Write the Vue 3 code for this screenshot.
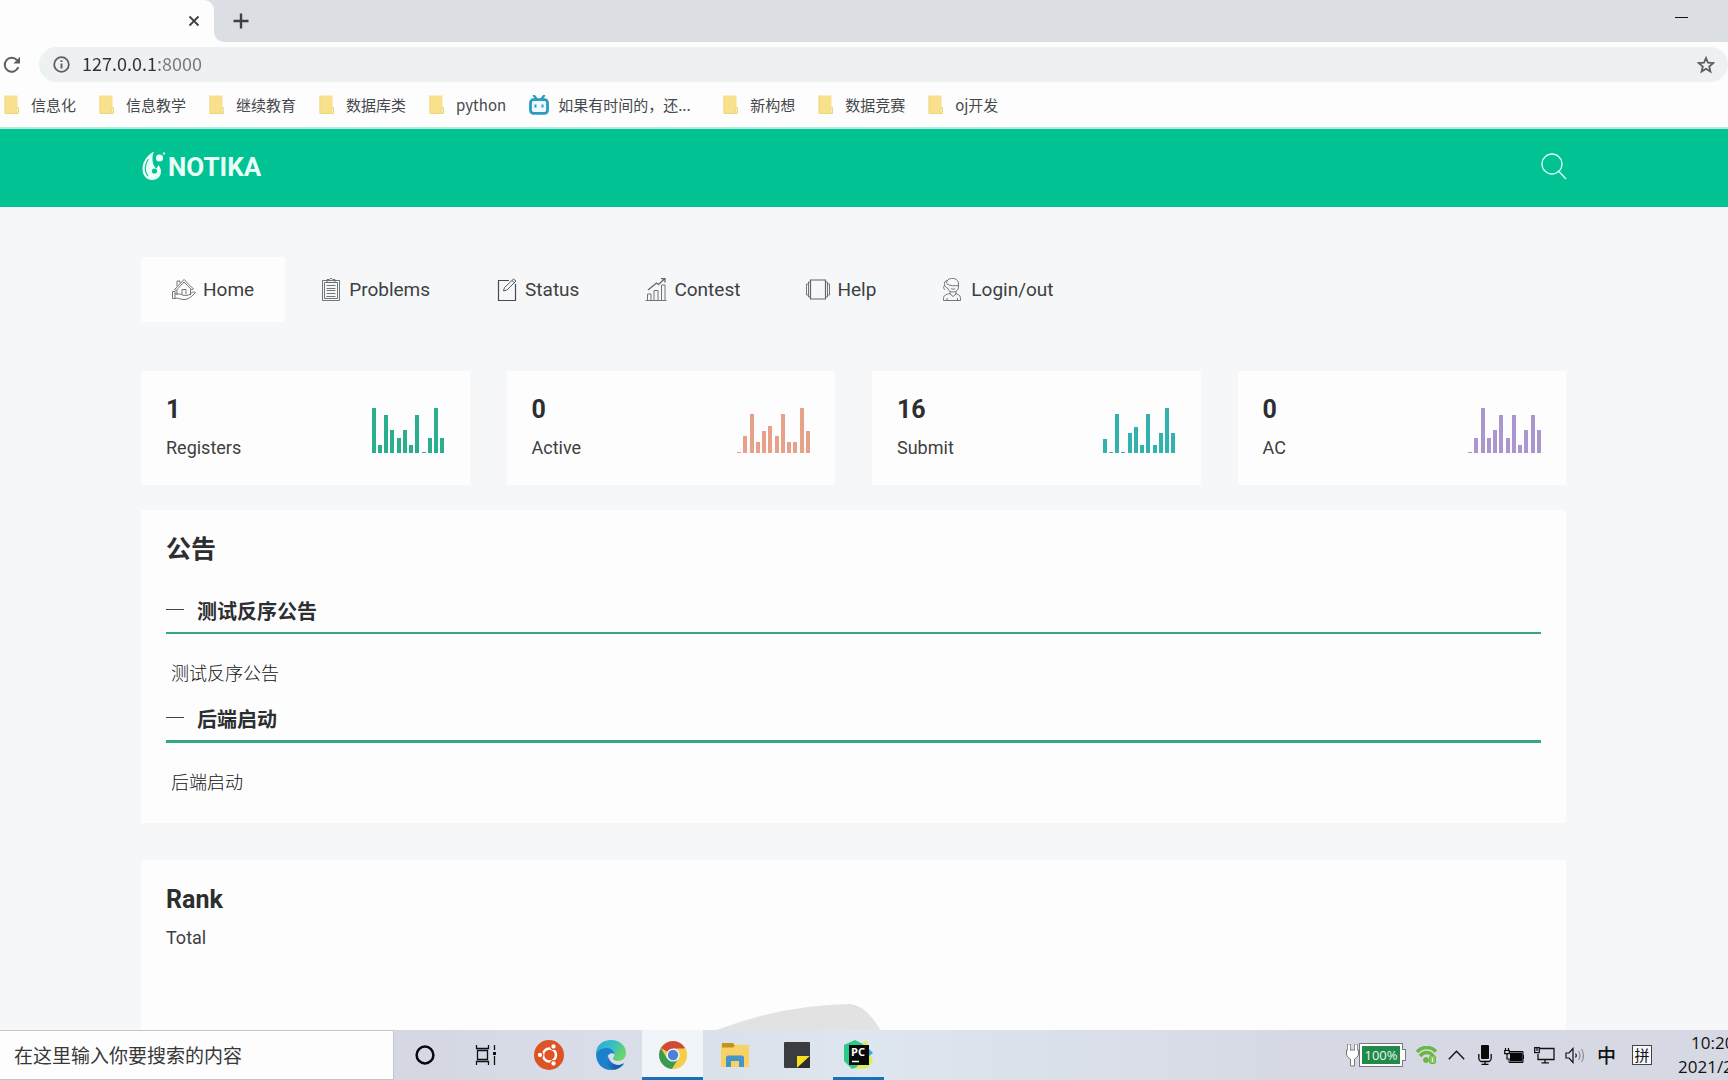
<script setup>
const bookmarks = [
  { label: '信息化' },
  { label: '信息教学' },
  { label: '继续教育' },
  { label: '数据库类' },
  { label: 'python' },
  { label: '如果有时间的，还...', site: true },
  { label: '新构想' },
  { label: '数据竞赛' },
  { label: 'oj开发' },
]

const nav = [
  { id: 'home', label: 'Home', width: 24, box: '0 0 24 24' },
  { id: 'problems', label: 'Problems', width: 22, box: '-1 1 22 24' },
  { id: 'status', label: 'Status', width: 22, box: '-1 1 22 24' },
  { id: 'contest', label: 'Contest', width: 22, box: '0 1 22 24' },
  { id: 'help', label: 'Help', width: 24, box: '0 1 24 24' },
  { id: 'login', label: 'Login/out', width: 22, box: '0 1 22 24' },
]

const stats = [
  { value: 1, label: 'Registers', color: '#2bae8d', bars: [45, 8, 38, 23, 15, 23, 8, 38, 1, 15, 45, 15] },
  { value: 0, label: 'Active', color: '#e8a189', bars: [1, 17, 39, 11, 22, 27, 17, 39, 11, 11, 45, 22] },
  { value: 16, label: 'Submit', color: '#31b2af', bars: [14, 1, 39, 1, 20, 26, 8, 39, 8, 20, 45, 20] },
  { value: 0, label: 'AC', color: '#ab96cf', bars: [1, 15, 45, 15, 23, 38, 15, 38, 8, 23, 38, 23] },
]

const notices = [
  { title: '测试反序公告', body: '测试反序公告' },
  { title: '后端启动', body: '后端启动' },
]
</script>

<template>
  <div class="screen">
    <div class="tabstrip">
      <div class="tab">
        <button class="plain" aria-label="Close tab">
          <svg width="12" height="12" viewBox="0 0 12 12"><path d="M1.5 1.5l9 9M10.5 1.5l-9 9" stroke="#3c4043" stroke-width="1.8" /></svg>
        </button>
      </div>
      <div class="strip">
        <button class="plain" aria-label="New tab">
          <svg width="16" height="16" viewBox="0 0 16 16"><path d="M8 .5v15M.5 8h15" stroke="#3c4043" stroke-width="2.4" /></svg>
        </button>
        <button class="plain minimize" aria-label="Minimize">
          <svg width="14" height="2" viewBox="0 0 14 2"><path d="M0 1.500h13" stroke="#111" /></svg>
        </button>
      </div>
    </div>

    <div class="toolbar">
      <button class="plain" aria-label="Reload">
        <svg width="18" height="18" viewBox="0 0 18 18">
          <path d="M15.3 11.2A7 7 0 1 1 14 4.2" fill="none" stroke="#5c6063" stroke-width="2" />
          <path d="M17 .8v6.6h-6.6z" fill="#5c6063" />
        </svg>
      </button>
      <div class="omnibox">
        <svg width="17" height="17" viewBox="0 0 17 17">
          <circle cx="8.5" cy="8.5" r="7.3" fill="none" stroke="#5c6063" stroke-width="1.8" />
          <path d="M8.5 7.4v5M8.5 4.2v1.9" stroke="#5c6063" stroke-width="1.9" />
        </svg>
        <input class="address" type="text" aria-label="Address" value="127.0.0.1:8000" />
        <button class="plain" aria-label="Bookmark this page">
          <svg width="18" height="18" viewBox="0 0 18 18">
            <path d="M9 2l2 4.7 5.1.4-3.9 3.4 1.2 5L9 12.8l-4.4 2.7 1.2-5L1.900 7.100 7 6.700z" fill="none" stroke="#5c6063" stroke-width="1.8" />
          </svg>
        </button>
      </div>
    </div>

    <nav class="bookmarks" aria-label="Bookmarks">
      <a v-for="b in bookmarks" :key="b.label" href="#" :class="{ site: b.site }">
        <svg v-if="b.site" width="20" height="20" viewBox="0 0 20 20">
          <path d="M5 .8l3 3.600M15 .8l-3 3.600" stroke="#2a9cc0" stroke-width="2.400" stroke-linecap="round" />
          <rect x="1.500" y="4.700" width="17" height="13.600" rx="3" fill="#eefaff" stroke="#2a9cc0" stroke-width="2.800" />
          <path d="M6.500 9.600v3M13.500 9.600v3" stroke="#2a9cc0" stroke-width="2" />
        </svg>
        <svg v-else width="15" height="19" viewBox="0 0 15 19">
          <path d="M1 .5h12.500V13c1 1 1.500 2 1 5.500H1z" fill="#f8e08c" />
          <path d="M14.500 12.500c-2.500.5-3 3.500-1.500 6h1.500z" fill="#fbeeb8" stroke="#e8cb6b" stroke-width=".7" />
          <path d="M.9.5v18h13" fill="none" stroke="#efd67c" />
        </svg>
        <span>{{ b.label }}</span>
      </a>
    </nav>

    <header class="header">
      <a class="logo" href="#">
        <svg width="24" height="30" viewBox="0 0 24 30">
          <path d="M12 .5C5 4 .5 11 .5 18c0 6.500 4 11 9.500 11 5 0 9-3.500 9-8.500 0-2.500-1-5-3-6.500 0 2-1 3-2.200 3.300C10 13 9.500 6 12 .5z" fill="#e9fff8" />
          <path d="M6.500 8c-4 5.500-4.500 12.500-.5 17" fill="none" stroke="#00c292" stroke-width="1.100" />
          <circle cx="12.500" cy="20" r="2.600" fill="#00c292" />
          <circle cx="17.500" cy="7" r="3.600" fill="#e9fff8" />
          <circle cx="22" cy="2.500" r="1.300" fill="#b7f3e1" />
        </svg>
        <span>NOTIKA</span>
      </a>
      <button class="plain" aria-label="Search">
        <svg width="26" height="27" viewBox="0 0 26 27">
          <circle cx="11" cy="11" r="10" fill="none" stroke="#d6fff3" stroke-width="1.300" />
          <path d="M17.500 18l7.500 8" stroke="#d6fff3" stroke-width="1.500" />
        </svg>
      </button>
    </header>

    <main class="page">
      <nav class="menu" aria-label="Main">
        <a v-for="n in nav" :key="n.id" href="#" :class="{ active: n.id === 'home' }">
          <svg :width="n.width" height="24" :viewBox="n.box" fill="none" stroke="#63676a" stroke-width=".9">
            <template v-if="n.id === 'home'">
              <path d="M2.500 11.500L12 1.500l9.500 9.500-1.500 1L12 4 4 12.500zM5 8V3h3v2M5 12v5M18.500 11.500v5.500M10 16.500v-5h4v5" />
              <path d="M.5 13.500h2.500v7H.5zM3 20.500c3-1.500 5 1.500 10 1 4.500-.5 7-3.500 10.500-7-2-1.500-4 .5-5.500 1.800-2 1.400-4.500 1.200-7 1-2-1.500-5-1.500-8-1.300" />
            </template>
            <template v-else-if="n.id === 'problems'">
              <path d="M1.500 3.500h17v20h-17zM3.500 5.500h13v16h-13zM6 5.500v-3h2.500l1.500-1.500 1.500 1.500H14v3z" />
              <path d="M5.500 8.500h9M5.500 11.500h9M5.500 13.500h9M5.500 16.500h9M5.500 19.500h9" />
            </template>
            <template v-else-if="n.id === 'status'">
              <path d="M12 3.500H1.500v20h17V7" stroke="#484c4f" stroke-width="1.200" />
              <path d="M6.500 14l1-3.500 9-8.500 2.500 2-9 9zM15 3.500l2.500 2.300" stroke="#484c4f" />
            </template>
            <template v-else-if="n.id === 'contest'">
              <path d="M.5 23.500h21M2.500 23v-6h3.500v6M9 23v-9.500h4V23M16.500 23V8h3.500v15" />
              <path d="M3 13l8.500-7 2 1.500 6.500-6M16 1.600h4v4" stroke-width="1.300" />
            </template>
            <template v-else-if="n.id === 'help'">
              <path d="M4.500 3h15v19h-15z" stroke-width="1.200" />
              <path d="M4.500 5h-2v15h2M19.500 5h2v15h-2M2.500 7h-2v11h2M21.500 7h2v11h-2" />
            </template>
            <template v-else>
              <path d="M4.500 6.500c0-7 12-7 12 .5v3c0 6-9.500 7-11 1C2 10 1 5 5 3M5 7c3 2 8 2 11 1.500M3 8c-1.500 1-2 3 0 5M8 14.500v2.500l3 2.500 3-2.500v-2.500M8 16.500c-4 1-6.500 1.500-6.500 5v2h17v-2c0-3.500-2.500-4-5-5M5 21v2M15.500 21v2M9 11.500c1 1 3 1 4 0" />
            </template>
          </svg>
          <span>{{ n.label }}</span>
        </a>
      </nav>

      <section class="stats">
        <article v-for="s in stats" :key="s.label" class="stat">
          <div>
            <h2>{{ s.value }}</h2>
            <p>{{ s.label }}</p>
          </div>
          <div class="bars">
            <i v-for="(h, i) in s.bars" :key="i" :style="{ height: h + 'px', background: s.color }"></i>
          </div>
        </article>
      </section>

      <section class="panel notices">
        <h2>公告</h2>
        <article v-for="n in notices" :key="n.title">
          <h3><span class="dash"></span>{{ n.title }}</h3>
          <p>{{ n.body }}</p>
        </article>
      </section>

      <section class="panel rank">
        <h2>Rank</h2>
        <p>Total</p>
        <svg class="pie" width="300" height="80" viewBox="0 0 300 80">
          <path d="M0 31Q72 1 146 0Q162 1 177 27L190 60L150 80L0 80z" fill="#e2e2e2" />
        </svg>
      </section>
    </main>

    <footer class="taskbar">
      <input class="find" type="text" aria-label="Search Windows" placeholder="在这里输入你要搜索的内容" />
      <div class="apps">
        <button class="app" aria-label="Cortana">
          <svg width="20" height="20" viewBox="0 0 20 20"><circle cx="10" cy="10" r="8.400" fill="none" stroke="#05080c" stroke-width="2.500" /></svg>
        </button>
        <button class="app" aria-label="Task view">
          <svg width="24" height="20" viewBox="0 0 24 20" fill="none" stroke="#111" stroke-width="1.300">
            <path d="M1.500 0v3.500h12V0M1.500 20v-3.500h12V20M2.500 5.500h10v9h-10zM19.500 0v5M19.500 11v9" />
            <path d="M18 7h3v3h-3z" fill="#111" stroke="none" />
          </svg>
        </button>
        <button class="app" aria-label="Ubuntu">
          <svg width="30" height="30" viewBox="0 0 30 30">
            <circle cx="15" cy="15" r="15" fill="#dd5325" />
            <circle cx="15.500" cy="15" r="6.500" fill="none" stroke="#fff" stroke-width="2.500" />
            <g stroke="#dd5325" stroke-width="1.300" fill="#fff">
              <circle cx="6" cy="15" r="2.800" /><circle cx="19.500" cy="6.500" r="2.800" /><circle cx="19.500" cy="23.500" r="2.800" />
            </g>
          </svg>
        </button>
        <button class="app" aria-label="Edge">
          <svg width="30" height="30" viewBox="0 0 30 30">
            <defs>
              <linearGradient id="edgeTop" x1="0" y1="0" x2="1" y2=".5"><stop offset="0" stop-color="#2aa7dc" /><stop offset=".55" stop-color="#38bfc3" /><stop offset="1" stop-color="#68d767" /></linearGradient>
              <linearGradient id="edgeLow" x1="0" y1="0" x2="1" y2="1"><stop offset="0" stop-color="#2193d8" /><stop offset="1" stop-color="#124b94" /></linearGradient>
            </defs>
            <path d="M0 14C0 5 7 0 15 0c9 0 15 6 15 13 0 5-4 8-8 8-3 0-5-1-5-2.500s1.500-1.500 1.500-4c0-3-3-5.500-7-5.500-5 0-9 2-11.500 5z" fill="url(#edgeTop)" />
            <path d="M0 14c2-4 6-6 11-6 4 0 8 3 7.500 7-.5-2-3-2.500-5-1-4 3-2.500 10 5 11.500 4 .7 7-.5 9.500-2-2.500 4-7 6.500-13 6.500C6 30 0 23 0 14z" fill="#1c80cc" />
            <path d="M11.500 14c-4 4-1 13.500 8 15.500 4-1.500 7-4 8.700-6.500-3.700 2.500-8 2.500-11 .5-3-1.800-5-5-5.700-9.500z" fill="url(#edgeLow)" />
          </svg>
        </button>
        <button class="app open current" aria-label="Chrome">
          <svg width="28" height="28" viewBox="0 0 28 28">
            <circle cx="14" cy="14" r="14" fill="#f7ce4b" />
            <path d="M14 14L1.900 7A14 14 0 0 1 26.100 7z" fill="#d0493a" />
            <path d="M14 14l-6 3.500L1.900 7a14 14 0 0 0 11 21l6.500-10.500z" fill="#3a9b54" />
            <path d="M14 7.500h12.400A14 14 0 0 1 14 28l6-10.500z" fill="#f7ce4b" />
            <circle cx="14" cy="14" r="6.600" fill="#f5f7fb" /><circle cx="14" cy="14" r="5.200" fill="#4d80dc" />
          </svg>
        </button>
        <button class="app" aria-label="File Explorer">
          <svg width="28" height="26" viewBox="0 0 28 26">
            <path d="M0 3h28v21a1 1 0 0 1-1 1H1a1 1 0 0 1-1-1z" fill="#f9d265" />
            <path d="M1 1h11l2 3-2 1.500H1z" fill="#c6921f" />
            <path d="M5 25v-9.500c0-1 1-2 2-2h14c1 0 2 1 2 2V25h-5v-6h-8v6z" fill="#4596c6" />
          </svg>
        </button>
        <button class="app" aria-label="Sticky Notes">
          <svg width="26" height="26" viewBox="0 0 26 26">
            <rect width="26" height="26" rx="1" fill="#3a3c40" /><path d="M13 26V14h13z" fill="#fadd21" /><path d="M13 26L26 14v11a1 1 0 0 1-1 1z" fill="#2c2d30" />
          </svg>
        </button>
        <button class="app open behind" aria-label="PyCharm">
          <svg width="30" height="30" viewBox="0 0 30 30">
            <path d="M0 5L11 0l8 4 3 20-14 5-8-8z" fill="#2bc98a" />
            <path d="M19 2l4-1 1 7 5 14-6 6-12 1 6-8z" fill="#dfee4b" /><path d="M24 8l5 5-4 3z" fill="#27aee0" />
            <rect x="5" y="5" width="20" height="20" fill="#08090a" />
            <text x="7" y="16" font-family="Open Sans, sans-serif" font-size="11" font-weight="700" fill="#fff">PC</text>
            <path d="M8 21.500h7" stroke="#fff" stroke-width="1.500" />
          </svg>
        </button>
      </div>

      <div class="tray">
        <div class="power">
          <svg width="15" height="24" viewBox="0 0 15 24"><path d="M4 1v6M11 1v6" stroke="#77797d" stroke-width="3.500" /><path d="M1.500 7h12v4c0 3-2.500 4-4 5v7h-4v-7c-1.500-1-4-2-4-5z" fill="#fff" stroke="#77797d" /><path d="M4 1.500v7M11 1.500v7" stroke="#fff" stroke-width="2" /></svg>
          <span class="charge">100%</span>
          <i class="cap"></i>
        </div>
        <svg width="21" height="18" viewBox="0 0 21 18" fill="none" stroke="#6cb744">
          <path d="M1 6c5-6 14-6 19-.5M4 10c4-4.500 9-4.500 13-.5" stroke-width="3.500" /><circle cx="10" cy="14" r="2.500" fill="#6cb744" /><rect x="13.500" y="9.500" width="6" height="8" rx="1.500" fill="#8bc96b" /><path d="M16.500 12v4" stroke="#e7f6de" />
        </svg>
        <svg class="more" width="17" height="10" viewBox="0 0 17 10"><path d="M.8 9.200L8.500 1.200l7.700 8" fill="none" stroke="#111" stroke-width="1.400" /></svg>
        <svg width="14" height="20" viewBox="0 0 14 20"><rect x="3" width="8" height="14" rx="1" fill="#080808" /><path d="M.8 9v4c0 2 1.500 3.500 3 3.500h6.400c1.500 0 3-1.500 3-3.500V9M7 16v3.300M3.500 19.300h7" fill="none" stroke="#080808" stroke-width="1.300" /></svg>
        <svg width="22" height="15" viewBox="-2 0 22 15"><path d="M6 4.500h12.500v9H6z" fill="#080808" /><path d="M5 3.500h14v11H5v-3M19.500 7v4" fill="none" stroke="#080808" /><path d="M1.500 0v2M4.500 0v2M.7 2.500h4.600v3.200H.7zM3 6v5h3" fill="none" stroke="#080808" stroke-width="1.200" /></svg>
        <svg width="21" height="17" viewBox="0 0 21 17" fill="none" stroke="#111" stroke-width="1.300"><path d="M6 1.500h14v11H4V7M11 12.500v3M7.500 15.800h7.500M.7.700h4.600v5H.7zM3 1v3" /></svg>
        <svg width="22" height="17" viewBox="0 0 22 17" fill="none" stroke="#111" stroke-width="1.200"><path d="M1 6h3l4-4.500v14L4 11H1zM10.500 6.500q1.500 2 0 4" /><path d="M13.500 4q3 4.500 0 9M16.500 2q4 6.500 0 13" stroke="#8d9097" /></svg>
        <span class="ime">中</span>
        <span class="pinyin">拼</span>
      </div>
      <div class="clock"><span>10:20</span><span>2021/2</span></div>
    </footer>
  </div>
</template>

<style>
body {
  margin: 0;
  background: #f6f7f9;
}
</style>

<style scoped>
* {
  box-sizing: border-box;
}
.screen {
  display: flex;
  flex-direction: column;
  height: 100vh;
  overflow: hidden;
  font-family: Roboto, "Noto Sans CJK SC", sans-serif;
  color: #2c2e2f;
}
svg {
  display: block;
  flex: none;
}
a {
  color: inherit;
  text-decoration: none;
}
h2, h3, p {
  margin: 0;
}
.plain {
  display: flex;
  padding: 0;
  border: 0;
  background: none;
}

/* browser chrome */
.tabstrip {
  display: flex;
  height: 42px;
  flex: none;
  background: linear-gradient(90deg, #fdfdfe 50%, #dbdfe3 50%);
}
.tab {
  display: flex;
  align-items: center;
  justify-content: flex-end;
  width: 214px;
  padding-right: 14px;
  background: #fdfdfe;
  border-radius: 0 10px 0 0;
  box-shadow: 10px -10px 0 #dbdfe3;
}
.strip {
  display: flex;
  flex: 1;
  align-items: center;
  justify-content: space-between;
  padding: 0 39px 0 19px;
  background: #dbdfe3;
  border-radius: 0 0 0 10px;
}
.minimize {
  margin-bottom: 8px;
}
.toolbar {
  display: flex;
  flex: none;
  align-items: center;
  gap: 18px;
  padding: 5px 0 0 3px;
  background: #fdfdfe;
}
.omnibox {
  display: flex;
  flex: 1;
  align-items: center;
  height: 35px;
  padding: 0 13px 0 14px;
  gap: 12px;
  background: #edf1f2;
  border-radius: 18px;
}
.address {
  flex: 1;
  padding: 0 0 3px;
  border: 0;
  outline: 0;
  font: 18px "Noto Sans CJK SC", sans-serif;
  color: transparent;
  background: linear-gradient(90deg, #303234 75px, #75797c 75px);
  background-clip: text;
}
.bookmarks {
  display: flex;
  flex: none;
  align-items: center;
  gap: 23px;
  height: 47px;
  padding-left: 4px;
  background: #fdfdfe;
  border-bottom: 2px solid #b4ebdc;
  font: 15px/20px "Noto Sans CJK SC", sans-serif;
  color: #46494c;
}
.bookmarks a {
  display: flex;
  align-items: center;
  gap: 12px;
}
.bookmarks .site {
  gap: 9px;
  width: 171px;
}

/* site header */
.header {
  display: flex;
  flex: none;
  align-items: center;
  justify-content: space-between;
  height: 78px;
  padding: 0 161px 4px 142px;
  background: #00c292;
}
.logo {
  display: flex;
  align-items: center;
  gap: 2px;
  color: #e9fff8;
  font-size: 26px;
  line-height: 30px;
  font-weight: 700;
}
.logo span {
  padding-top: 2px;
}

.page {
  flex: 1;
  min-height: 0;
  overflow: hidden;
  padding: 50px 162px 0 141px;
  background: #f6f7f9;
}
.menu {
  display: flex;
  gap: 4px;
  margin-bottom: 49px;
  color: #3d4042;
  font-size: 19px;
  line-height: 24px;
}
.menu a {
  display: flex;
  align-items: center;
  gap: 7px;
  height: 65px;
  padding: 0 31px;
}
.menu .active {
  background: #fdfdfe;
  border-radius: 2px;
}

.stats {
  display: grid;
  grid-template-columns: repeat(4, 1fr);
  gap: 37px;
  margin-bottom: 25px;
}
.stat {
  display: flex;
  align-items: center;
  justify-content: space-between;
  height: 114px;
  padding: 2px 25px 0;
  background: #fdfdfe;
}
.stat h2 {
  font-size: 25px;
  line-height: 26px;
  margin-bottom: 12px;
}
.stat p {
  font-size: 18px;
  line-height: 26px;
  color: #3d4042;
}
.bars {
  display: flex;
  align-items: flex-end;
  justify-content: space-between;
  width: 73px;
  height: 45px;
  margin-top: 3px;
}
.bars i {
  width: 4px;
}

.panel {
  padding: 26px 25px;
  margin-bottom: 37px;
  background: #fdfdfe;
}
.panel h2 {
  font-size: 25px;
  line-height: 28px;
}
.panel p {
  font-size: 18px;
  line-height: 28px;
  color: #3d4042;
}
.notices h2 {
  margin-bottom: 34px;
}
.notices h3 {
  display: flex;
  align-items: center;
  gap: 13px;
  padding-bottom: 6px;
  margin-bottom: 26px;
  border-bottom: 2px solid #35a68a;
  font-size: 20px;
  line-height: 28px;
}
.notices article + article h3 {
  border-bottom-width: 3px;
}
.notices article + article {
  margin-top: 18px;
}
.notices p {
  padding-left: 5px;
  font-weight: 300;
  color: #111;
}
.dash {
  width: 18px;
  height: 1px;
  margin-bottom: 5px;
  background: #444;
}
.rank p {
  margin-top: 10px;
}
.pie {
  margin: 52px auto 0;
}

/* desktop taskbar */
.taskbar {
  display: flex;
  flex: none;
  height: 50px;
  background: linear-gradient(90deg, #d5d8e3 25%, #dee6ef 50%, #d6d9e3 75%);
  color: #111;
}
.find {
  width: 394px;
  padding: 0 14px 2px;
  border: 1px solid #c3c6ca;
  border-left: 0;
  border-radius: 0;
  outline: 0;
  background: #fdfdfe;
  font: 19px "Noto Sans CJK SC", sans-serif;
}
.find::placeholder {
  color: #383838;
  opacity: 1;
}
.apps {
  display: flex;
  gap: 1px;
}
.app {
  display: flex;
  align-items: center;
  justify-content: center;
  width: 61px;
  padding: 3px 0 0;
  border: 0;
  border-bottom: 3px solid transparent;
  background: none;
}
.open {
  border-bottom-color: #1671b8;
}
.current {
  background-color: #f1f4f8;
}
.behind {
  width: 51px;
  margin: 0 5px;
}
.tray {
  display: flex;
  align-items: center;
  gap: 10px;
  margin-left: auto;
}
.power {
  display: flex;
  align-items: center;
}
.charge {
  width: 42px;
  border: 2px solid #fff;
  outline: 1px solid #77797d;
  background: #218a4b;
  color: #e7f7ec;
  font: 13px/18px "Open Sans", sans-serif;
  text-align: center;
}
.cap {
  width: 4px;
  height: 12px;
  background: #fff;
  border: 1px solid #77797d;
  border-left: 0;
}
.more {
  margin: 0 3px 0 1px;
}
.ime {
  font: 500 19px/24px "Noto Sans CJK SC", sans-serif;
}
.pinyin {
  width: 20px;
  margin-left: 6px;
  border: 1px solid #444;
  background: #f6f7fa;
  font: 15px/18px "Noto Sans CJK SC", sans-serif;
  text-align: center;
}
.clock {
  display: flex;
  flex-direction: column;
  width: 50px;
  margin-left: 26px;
  padding-top: 1px;
  overflow: hidden;
  white-space: nowrap;
  font: 17px/24px "Open Sans", sans-serif;
}
.clock span:first-child {
  padding-left: 13px;
}
</style>
